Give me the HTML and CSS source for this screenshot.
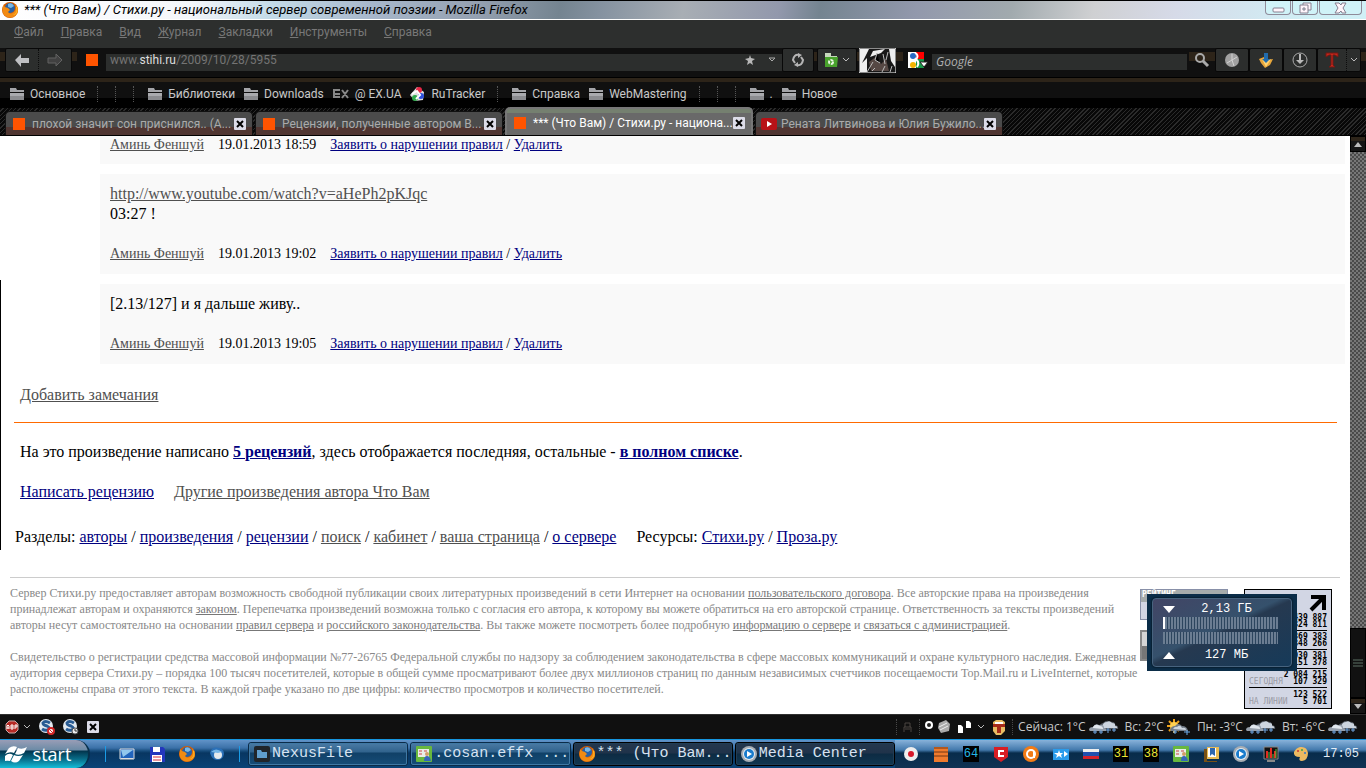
FILE: index.html
```html
<!DOCTYPE html>
<html lang="ru">
<head>
    <meta charset="utf-8">
    <title>*** (Что Вам) / Стихи.ру</title>
    <link rel="stylesheet" href="styles.css">
</head>
<body>
    <svg class="sprite" width="0" height="0" aria-hidden="true">
        <symbol id="folder" viewBox="0 0 14 12">
            <path fill="#a4a5a9" d="M0 0h6l1 2h7v2H0z"/>
            <path fill="#8b8c90" d="M0 5h14v7H0z"/>
            <path fill="#a9aaae" d="M0 5h14v3H0z"/>
        </symbol>
        <symbol id="x" viewBox="0 0 12 12">
            <rect width="12" height="12" rx="1" fill="#dcdce8"/>
            <path stroke="#000" stroke-width="2" d="M3 3l6 6M9 3l-6 6"/>
        </symbol>
        <symbol id="chevron" viewBox="0 0 8 6">
            <path fill="none" stroke="#bbb" stroke-width="1" d="M1 1l3 3 3-3"/>
        </symbol>
        <symbol id="firefox" viewBox="0 0 16 16">
            <circle cx="8" cy="8" r="8" fill="#d35d05"/>
            <circle cx="8" cy="6" r="5" fill="#2861a5"/>
            <path fill="#78b7e5" d="M6 2q4-2 6 2l-3 2-3-1z"/>
            <path fill="#f28b13" d="M1 3q2 3 5 3l2 2-2 2q2 3 6 0 3-3 1-8 5 5 2 10-4 5-10 3-6-3-4-10z"/>
            <path fill="#ffc528" d="M14 5q2 6-3 8 5 0 4-8z"/>
        </symbol>
        <symbol id="cloud" viewBox="0 0 31 14">
            <path fill="#555b63" d="M12 8q-1-4 3-5 4-4 7-1 5-1 5 3 4 1 3 4H13z"/>
            <path fill="#cdd5df" d="M14 7q1-5 5-5 3-2 5 1 4 0 3 3 3 0 2 2H14z"/>
            <path fill="#969fab" d="M1 10q0-3 4-3 2-4 6-2 5-1 5 3 3 0 2 3H2z"/>
            <path fill="#e1e7ed" d="M5 7q2-3 5-2l2 1q3 0 3 3L5 8z"/>
            <path stroke="#70a6e1" stroke-width="1" d="M7 10v4M5 12h4M13 10v4M11 12h4M20 8v5M18 10h5M26 8v4M24 10h4"/>
        </symbol>
        <symbol id="suncloud" viewBox="0 0 25 16">
            <path stroke="#f0a31a" stroke-width="2" d="M8 0v14M1 7h14M3 2l10 10M13 2L3 12"/>
            <circle cx="8" cy="7" r="4" fill="#ffd052"/>
            <path fill="#727c88" d="M4 11q1-4 5-4 3-4 7 0 5 0 6 5H5z"/>
            <path fill="#ccd5de" d="M7 10q2-3 4-2 3-3 5 1 4-1 4 2z"/>
            <path stroke="#6caceb" stroke-width="1" d="M9 11v4M7 13h4M21 11v5M18 13h6"/>
        </symbol>
        <symbol id="effx" viewBox="0 0 16 16">
            <rect width="16" height="16" rx="1" fill="#68b83d"/>
            <path fill="#e8eee7" d="M2 3h11v8H2z"/>
            <path stroke="#c44" stroke-width="1" d="M3 5h3M8 5h3M3 8h3"/>
            <path fill="#3567b8" d="M8 15q0-5 3-5t4 5z"/>
            <circle cx="11" cy="8" r="2" fill="#d19c69"/>
        </symbol>
        <symbol id="media" viewBox="0 0 16 16">
            <circle cx="8" cy="8" r="8" fill="#a8adb3"/>
            <circle cx="8" cy="8" r="6" fill="#e3edf5"/>
            <circle cx="8" cy="8" r="5" fill="#197bcc"/>
            <path fill="#fff" d="M6 5l5 3-5 3z"/>
        </symbol>
        <symbol id="ess" viewBox="0 0 16 16">
            <circle cx="7" cy="7" r="7" fill="#e2e9f0"/>
            <path fill="none" stroke="#285b93" stroke-width="3" d="M11 4q-5-3-7 0 0 2 4 3 4 2 1 4-3 1-6-1"/>
        </symbol>
    </svg>

    <header class="titlebar">
        <svg class="i16" viewBox="0 0 16 16"><use href="#firefox"/></svg>
        <span class="caption">*** (Что Вам) / Стихи.ру - национальный сервер современной поэзии - Mozilla Firefox</span>
        <div class="winbtns">
            <button aria-label="Свернуть"><svg width="13" height="12" viewBox="0 0 13 12"><rect x="1" y="6" width="11" height="4" rx="1" fill="#fff5fb" stroke="#858090"/></svg></button>
            <button aria-label="Развернуть"><svg width="13" height="12" viewBox="0 0 13 12"><path fill="#fff5fb" stroke="#858090" d="M4 1h8v7H4z"/><path fill="#fff5fb" stroke="#858090" d="M1 3h8v8H1z"/><path fill="#d4f3f8" stroke="#858090" d="M4 6h2v2H4z"/></svg></button>
            <button class="wide" aria-label="Закрыть"><svg width="13" height="12" viewBox="0 0 13 12"><path fill="#fff5fb" stroke="#858090" d="M1 1h4l2 2 1-2h4L9 6l3 5H8L7 9l-2 2H1l3-5z"/></svg></button>
        </div>
    </header>

    <nav class="menubar">
        <a href="#"><u>Ф</u>айл</a>
        <a href="#"><u>П</u>равка</a>
        <a href="#"><u>В</u>ид</a>
        <a href="#"><u>Ж</u>урнал</a>
        <a href="#"><u>З</u>акладки</a>
        <a href="#"><u>И</u>нструменты</a>
        <a href="#"><u>С</u>правка</a>
    </nav>

    <div class="navbar">
        <div class="group history">
            <button aria-label="Назад"><svg width="16" height="14" viewBox="0 0 16 14"><path fill="#bfc0c3" d="M1 7l6-6v4h8v5H7v4z"/></svg></button>
            <button aria-label="Вперёд"><svg width="16" height="14" viewBox="0 0 16 14"><path fill="#414141" stroke="#626262" d="M15 7L9 1v4H1v5h8v3z"/></svg></button>
        </div>
        <div class="urlbar">
            <span class="fav"></span>
            <div class="address" role="textbox" aria-label="Адрес">www.<b>stihi.ru</b>/2009/10/28/5955</div>
            <svg width="12" height="12" viewBox="0 0 12 12"><path fill="#b8b8b8" d="M6 1l1 3 4 1-3 2 1 4-3-2-3 2 1-4-3-2 4-1z"/></svg>
            <svg width="8" height="6" viewBox="0 0 8 6"><path fill="none" stroke="#aaa" d="M1 1h6L4 4z"/></svg>
        </div>
        <button class="toolbtn reload" aria-label="Обновить"><svg width="14" height="14" viewBox="0 0 14 14"><path fill="none" stroke="#b5b5b5" stroke-width="2" d="M8 2q-5-1-6 5l2 3M6 12q5 1 6-5l-2-3"/><path fill="#b5b5b5" d="M7 0l4 2-4 3zM7 14l-4-2 4-3z"/></svg></button>
        <button class="toolbtn recycle" aria-label="Папка">
            <svg width="14" height="14" viewBox="0 0 14 14"><path fill="#c7d8bd" d="M1 0h6v3h6v3H1z"/><path fill="#49a32d" d="M1 4h13l-1 10H1z"/><circle cx="7" cy="9" r="2" fill="none" stroke="#eaf5e3" stroke-width="2" stroke-dasharray="3 1"/></svg>
            <svg width="8" height="6"><use href="#chevron"/></svg>
        </button>
        <svg class="thumb" width="37" height="25" viewBox="0 0 37 25">
            <path fill="#181818" stroke="#fff" d="M0 0h37v25H0z"/>
            <path fill="#eee" d="M1 1h9L3 15 8 10v14H1zM30 1h6v18l-4-6zM14 3l12-2-4 4-11 4z"/>
            <path fill="#564844" d="M10 14l8-6 4 8 5-5 3 12H12z"/>
            <path stroke="#bbb" stroke-width="1" d="M8 24l6-10M18 5l-2 7 5 3M24 6l2 10M29 4l-2 8M23 24l3-6M31 24l2-6M13 23l3-3"/>
        </svg>
        <div class="searchbox">
            <svg width="20" height="17" viewBox="0 0 20 17">
                <path fill="#f00" d="M8 0h8v8H8z"/><path fill="#179647" d="M8 7h8v9H8z"/><path fill="#fff" d="M0 0h8v16H0z"/>
                <circle cx="5" cy="4" r="3" fill="#286ac4"/><circle cx="5" cy="13" r="3" fill="#f4b400"/>
                <path fill="none" stroke="#fff" stroke-width="2" d="M8 1q3 4 0 6 4 4 1 8"/>
                <path fill="#fff" stroke="#222" d="M12 10h8l-4 5z"/>
            </svg>
            <input type="text" placeholder="Google" aria-label="Поиск">
        </div>
        <button class="find" aria-label="Найти"><svg width="16" height="16" viewBox="0 0 16 16"><circle cx="6" cy="6" r="4" fill="none" stroke="#aaa" stroke-width="2"/><path stroke="#aaa" stroke-width="3" d="M9 9l5 5"/></svg></button>
        <button class="toolbtn" aria-label="Часы"><svg class="i16" viewBox="0 0 16 16"><circle cx="8" cy="8" r="7" fill="#a1a1a1"/><path fill="none" stroke="#d2d2d2" d="M8 2v6l5-3M8 8l-5 3M8 8l2 6"/></svg></button>
        <button class="toolbtn" aria-label="Загрузки"><svg class="i16" viewBox="0 0 16 16"><path fill="#e7a63b" d="M1 7l5-2 3 3 6-1-3 6-5 3-4-5z"/><path fill="#ffd472" d="M4 7l4 2 5-2-5 8z"/><path fill="#216bac" d="M6 1h4v6h2l-4 4-4-4h2z"/></svg></button>
        <button class="toolbtn" aria-label="Скачать"><svg class="i16" viewBox="0 0 16 16"><circle cx="8" cy="8" r="7" fill="none" stroke="#aaa"/><path fill="#bbb" d="M7 2h2v6h3l-4 4-4-4h3z"/></svg></button>
        <div class="group textool">
            <button aria-label="Текст"><svg class="i16" viewBox="0 0 16 16"><path fill="#c5261b" stroke="#701914" d="M2 1h12v4l-3-2H9v10l2 2H5l2-2V3H5L2 5z"/></svg></button>
            <button class="narrow" aria-label="Меню"><svg width="8" height="6"><use href="#chevron"/></svg></button>
        </div>
    </div>

    <nav class="bookmarks">
        <a href="#"><svg class="fold"><use href="#folder"/></svg>Основное</a>
        <i></i><i></i><i></i>
        <a href="#"><svg class="fold"><use href="#folder"/></svg>Библиотеки</a>
        <a href="#"><svg class="fold"><use href="#folder"/></svg>Downloads</a>
        <a href="#"><svg width="16" height="10" viewBox="0 0 16 10"><path fill="none" stroke="#888" stroke-width="2" d="M7 1H1v7h6M2 5h5M9 1l6 8M15 1L9 9"/></svg>@ EX.UA</a>
        <a href="#"><svg width="15" height="16" viewBox="0 0 15 16"><path fill="#ddd" d="M7 1l7 5-1 8-8 1-5-6z"/><circle cx="9" cy="4" r="3" fill="#e82746"/><circle cx="11" cy="10" r="3" fill="#2d50db"/><circle cx="5" cy="12" r="3" fill="#2fa84b"/><path fill="none" stroke="#fff" stroke-width="2" d="M2 8l5-3 3 4-4 4"/></svg>RuTracker</a>
        <i></i>
        <a href="#"><svg class="fold"><use href="#folder"/></svg>Справка</a>
        <a href="#"><svg class="fold"><use href="#folder"/></svg>WebMastering</a>
        <i></i><i></i><i></i>
        <a href="#"><svg class="fold"><use href="#folder"/></svg>.</a>
        <a href="#"><svg class="fold"><use href="#folder"/></svg>Новое</a>
    </nav>

    <div class="tabs">
        <div class="tab"><span class="fav"></span><span class="label">плохой значит сон приснился.. (А...</span><button aria-label="Закрыть"><svg width="12" height="12"><use href="#x"/></svg></button></div>
        <div class="tab"><span class="fav"></span><span class="label">Рецензии, полученные автором В...</span><button aria-label="Закрыть"><svg width="12" height="12"><use href="#x"/></svg></button></div>
        <div class="tab active"><span class="fav"></span><span class="label">*** (Что Вам) / Стихи.ру - национа...</span><button aria-label="Закрыть"><svg width="12" height="12"><use href="#x"/></svg></button></div>
        <div class="tab video"><svg width="16" height="12" viewBox="0 0 16 12"><rect width="16" height="12" rx="2" fill="#b81217"/><path fill="#fff" d="M6 3l5 3-5 3z"/></svg><span class="label">Рената Литвинова и Юлия Бужило...</span><button aria-label="Закрыть"><svg width="12" height="12"><use href="#x"/></svg></button></div>
    </div>

    <div class="viewport">
        <main class="page">
            <div class="notes">
                <article class="note first">
                    <p class="meta"><a class="seen" href="#">Аминь Феншуй</a><span>19.01.2013 18:59</span><span><a href="#">Заявить о нарушении правил</a> / <a href="#">Удалить</a></span></p>
                </article>
                <article class="note">
                    <p><a class="seen" href="#">http://www.youtube.com/watch?v=aHePh2pKJqc</a><br>03:27 !</p>
                    <p class="meta"><a class="seen" href="#">Аминь Феншуй</a><span>19.01.2013 19:02</span><span><a href="#">Заявить о нарушении правил</a> / <a href="#">Удалить</a></span></p>
                </article>
                <article class="note">
                    <p>[2.13/127] и я дальше живу..</p>
                    <p class="meta"><a class="seen" href="#">Аминь Феншуй</a><span>19.01.2013 19:05</span><span><a href="#">Заявить о нарушении правил</a> / <a href="#">Удалить</a></span></p>
                </article>
            </div>
            <p class="add"><a class="seen" href="#">Добавить замечания</a></p>
            <hr class="orange">
            <p class="line">На это произведение написано <a href="#"><b>5 рецензий</b></a>, здесь отображается последняя, остальные - <a href="#"><b>в полном списке</b></a>.</p>
            <p class="line actions"><a href="#">Написать рецензию</a><a class="seen" href="#">Другие произведения автора Что Вам</a></p>
            <p class="sections">
                <span>Разделы: <a href="#">авторы</a> / <a href="#">произведения</a> / <a href="#">рецензии</a> / <a class="seen" href="#">поиск</a> / <a class="seen" href="#">кабинет</a> / <a class="seen" href="#">ваша страница</a> / <a href="#">о сервере</a></span>
                <span>Ресурсы: <a href="#">Стихи.ру</a> / <a href="#">Проза.ру</a></span>
            </p>
            <footer class="footer">
                <div class="legal">
                    <p>Сервер Стихи.ру предоставляет авторам возможность свободной публикации своих литературных произведений в сети Интернет на основании <a href="#">пользовательского договора</a>. Все авторские права на произведения<br>
                    принадлежат авторам и охраняются <a href="#">законом</a>. Перепечатка произведений возможна только с согласия его автора, к которому вы можете обратиться на его авторской странице. Ответственность за тексты произведений<br>
                    авторы несут самостоятельно на основании <a href="#">правил сервера</a> и <a href="#">российского законодательства</a>. Вы также можете посмотреть более подробную <a href="#">информацию о сервере</a> и <a href="#">связаться с администрацией</a>.</p>
                    <p>Свидетельство о регистрации средства массовой информации №77-26765 Федеральной службы по надзору за соблюдением законодательства в сфере массовых коммуникаций и охране культурного наследия. Ежедневная<br>
                    аудитория сервера Стихи.ру – порядка 100 тысяч посетителей, которые в общей сумме просматривают более двух миллионов страниц по данным независимых счетчиков посещаемости Top.Mail.ru и LiveInternet, которые<br>
                    расположены справа от этого текста. В каждой графе указано по две цифры: количество просмотров и количество посетителей.</p>
                </div>
                <div class="badges">
                    <div class="badge">РЕЙТИНГ</div>
                    <div class="badge grey"></div>
                </div>
                <div class="counter">
                    <div class="arrow"><svg width="18" height="18" viewBox="0 0 18 18"><path fill="none" stroke="#000" stroke-width="4" d="M2 3h13v13M15 3L2 16"/></svg></div>
                    <div class="row"><span></span><span>439 887<br>324 811</span></div>
                    <div class="row"><span></span><span>369 383<br>348 266</span></div>
                    <div class="row"><span></span><span>030 381<br>151 378</span></div>
                    <div class="row"><span>СЕГОДНЯ</span><span>2 084 215<br>107 329</span></div>
                    <div class="row"><span>НА ЛИНИИ</span><span>123 522<br>5 701</span></div>
                </div>
            </footer>
        </main>
        <div class="scrollbar">
            <button aria-label="Вверх"><svg width="8" height="5" viewBox="0 0 8 5"><path fill="#bbb" d="M0 5l4-5 4 5z"/></svg></button>
            <div class="track"></div>
            <div class="grip"><svg width="10" height="8" viewBox="0 0 10 8"><path stroke="#5c7065" d="M0 1h10M0 4h10M0 7h10"/></svg></div>
            <button aria-label="Вниз"><svg width="8" height="5" viewBox="0 0 8 5"><path fill="#bbb" d="M0 0h8L4 5z"/></svg></button>
        </div>
        <div class="gadget">
            <div class="glass">
                <div class="read"><svg width="12" height="7" viewBox="0 0 12 7"><path fill="#fff" d="M0 0h12L6 7z"/></svg><span>2,13 ГБ</span></div>
                <div class="bar now"></div>
                <div class="bar"></div>
                <div class="read"><svg width="12" height="7" viewBox="0 0 12 7"><path fill="#fff" d="M0 7h12L6 0z"/></svg><span>127 МБ</span></div>
            </div>
        </div>
    </div>

    <div class="addons">
        <svg class="i14" viewBox="0 0 14 14"><path fill="#b52a25" stroke="#c8aaa8" d="M4 1h6l3 3v6l-3 3H4l-3-3V4z"/><path fill="none" stroke="#fff" d="M2 9V6l1-1 1 1v3M2 8h2M6 9V5h2v4H6M6 7h2M10 9V5h2v2h-2"/></svg>
        <svg width="8" height="6"><use href="#chevron"/></svg>
        <svg class="i16 ess" viewBox="0 0 16 16"><use href="#ess"/><circle cx="12" cy="12" r="3" fill="#fff" stroke="#d32626" stroke-width="2"/><path stroke="#d32626" d="M10 10l4 4"/></svg>
        <svg class="i16 ess" viewBox="0 0 16 16"><use href="#ess"/><circle cx="12" cy="12" r="3" fill="#eee" stroke="#555"/><path fill="none" stroke="#333" d="M12 10v2h2"/></svg>
        <button class="ess" aria-label="Закрыть"><svg width="12" height="12"><use href="#x"/></svg></button>
        <div class="status">
            <i></i>
            <svg class="i12 dim" viewBox="0 0 12 12"><path fill="none" stroke="#4a4540" stroke-width="1" d="M3 6V2h5v4M2 11V6h7v5M3 8h5"/></svg>
            <i></i>
            <svg class="rec" width="46" height="16" viewBox="0 0 46 16"><circle cx="4" cy="6" r="3" fill="#222" stroke="#fff" stroke-width="2"/><path fill="#aaa" d="M14 4l7-3 4 4-1 7-8 2-3-5z"/><path stroke="#eee" d="M14 8l8-4M15 11l8-4"/><path fill="#fff" d="M33 6h3l2 2v6h-5zM41 2h3l2 2v5h-5z"/></svg>
            <svg width="8" height="6"><use href="#chevron"/></svg>
            <svg class="i16" viewBox="0 0 16 16"><path fill="#e9bd62" d="M2 3l3-2h6l3 2v9l-4 4H5l-3-4z"/><path fill="#a82c1a" d="M2 5h12v3h-4v6H6V8H2z"/><path fill="#fff" d="M4 3h8v2H4z"/></svg>
            <i></i>
            <span>Сейчас: 1°C</span><svg width="31" height="14"><use href="#cloud"/></svg>
            <span class="day">Вс: 2°C</span><svg width="25" height="16"><use href="#suncloud"/></svg>
            <span class="day">Пн: -3°C</span><svg width="31" height="14"><use href="#cloud"/></svg>
            <span class="day">Вт: -6°C</span><svg width="31" height="14"><use href="#cloud"/></svg>
        </div>
    </div>

    <div class="taskbar">
        <button class="start"><svg width="24" height="18" viewBox="0 0 24 18"><path fill="#fff" d="M4 3q4-3 8-1l-3 6Q5 6 0 9zM13 3q4 2 9-1l-3 6q-5 3-9 1zM0 11q4-4 8-1l-3 6q-4-1-8 1zM9 10q4 2 9 0l-4 6q-4 3-8 0z"/></svg>start</button>
        <div class="quick">
            <svg class="i16" viewBox="0 0 16 16"><path fill="#2164bc" stroke="#ddd" d="M1 3h14v10H1z"/><path fill="#91c7ed" d="M2 4h12L4 11z"/><path fill="#ddd" d="M2 12h12v1H2z"/></svg>
            <svg class="i16" viewBox="0 0 16 16"><path fill="#2337bd" d="M1 1h13l2 2v13H1z"/><path fill="#fff" d="M4 1h7v5H4zM3 9h10v7H3z"/><path stroke="#d82d38" d="M4 11h8M4 14h8"/></svg>
            <svg class="i16" viewBox="0 0 16 16"><use href="#firefox"/></svg>
            <svg class="i16" viewBox="0 0 16 16"><path fill="#2b70b7" d="M1 7q2-7 9-5 5 1 5 6-1 6-7 6-5 0-7-7z"/><circle cx="9" cy="9" r="4" fill="#e5e9ed"/><path fill="#76b6e8" d="M2 6q5-5 11 0L9 7z"/></svg>
        </div>
        <div class="tasks">
            <button><svg class="i16" viewBox="0 0 16 16"><rect width="16" height="16" rx="2" fill="#20252a"/><path fill="#5f9dcc" d="M3 4h4l1 2h5v6H3z"/></svg>NexusFile</button>
            <button><svg class="i16" viewBox="0 0 16 16"><use href="#effx"/></svg>.cosan.effx ...</button>
            <button class="dark"><svg class="i16" viewBox="0 0 16 16"><use href="#firefox"/></svg>*** (Что Вам...</button>
            <button class="dark"><svg class="i16" viewBox="0 0 16 16"><use href="#media"/></svg>Media Center</button>
        </div>
        <div class="tray">
            <svg class="i16" viewBox="0 0 16 16"><circle cx="8" cy="8" r="7" fill="#eee"/><circle cx="8" cy="8" r="3" fill="#d8192a"/></svg>
            <svg class="i16" viewBox="0 0 16 16"><path fill="#ef7a2d" d="M1 1h14v15H1z"/><path stroke="#733714" d="M1 2h14M1 6h14M1 10h14"/></svg>
            <span class="led cyan">64</span>
            <svg class="i16" viewBox="0 0 16 16"><path fill="#d81e24" d="M1 1h14v10l-7 5-7-5z"/><path fill="none" stroke="#fff" stroke-width="2" d="M11 5H6v5h5"/></svg>
            <svg class="i16" viewBox="0 0 16 16"><circle cx="8" cy="8" r="8" fill="#f17b16"/><circle cx="8" cy="8" r="4" fill="none" stroke="#fff" stroke-width="2"/><path stroke="#fff" stroke-width="2" d="M11 5v7"/></svg>
            <svg class="i16" viewBox="0 0 16 16"><path fill="#2b9ceb" d="M0 3h16v11H0z"/><path fill="#fff" d="M6 4l1 3h3L8 9l1 3-3-2-3 2 1-3-3-2h4zM11 5l4 3-4 3z"/></svg>
            <svg class="i16" viewBox="0 0 16 16"><path fill="#eee" d="M0 3h16v4H0z"/><path fill="#204fae" d="M0 6h16v4H0z"/><path fill="#d5222b" d="M0 10h16v3H0z"/></svg>
            <span class="led">31</span>
            <span class="led">38</span>
            <svg class="i16" viewBox="0 0 16 16"><use href="#effx"/></svg>
            <svg class="i16" viewBox="0 0 16 16"><path fill="#e8bb55" d="M4 1h12v12H4z"/><path fill="#775016" d="M1 3h3v12h10v1H1z"/><path fill="#fff" d="M5 2h8v9H5z"/><path fill="#2e67af" d="M7 2h5v8L9 8l-2 2z"/></svg>
            <svg class="i16" viewBox="0 0 16 16"><use href="#media"/></svg>
            <svg class="i16" viewBox="0 0 16 16"><path fill="#111" stroke="#888" d="M1 1h14v12H1z"/><path stroke="#e22c22" stroke-width="2" d="M4 12V5M8 12V2M12 12V5"/><path stroke="#55c042" d="M6 12V6M10 12V8M13 12V3"/><path fill="#888" d="M4 14h8v2H4z"/></svg>
            <svg class="i16" viewBox="0 0 16 16"><path fill="#edba61" d="M7 1q7-1 8 6 0 7-6 8-4 0-2-4Q0 11 1 6q2-4 6-5z"/><circle cx="5" cy="5" r="1" fill="#c33"/><circle cx="9" cy="4" r="1" fill="#38a54a"/><circle cx="12" cy="7" r="1" fill="#37c"/></svg>
            <time>17:05</time>
        </div>
    </div>
</body>
</html>
```
FILE: styles.css
```css
* {
    box-sizing: border-box;
}

body {
    margin: 0;
    height: 100vh;
    display: flex;
    flex-direction: column;
    overflow: hidden;
    background: #000;
    font-family: Roboto, "Open Sans", sans-serif;
    font-size: 12px;
    line-height: 16px;
    color: #c8c8c8;
}

p {
    margin: 0;
}

button {
    margin: 0;
    padding: 0;
    border: 0;
    background: none;
    font: inherit;
    color: inherit;
    display: flex;
    align-items: center;
    justify-content: center;
}

svg {
    flex: none;
    display: block;
}

.sprite {
    position: absolute;
}

.i16 {
    width: 16px;
    height: 16px;
}

.i14 {
    width: 14px;
    height: 14px;
}

.i12 {
    width: 12px;
    height: 12px;
}

/* window frame */
.titlebar {
    height: 20px;
    flex: none;
    display: flex;
    align-items: center;
    padding: 0 4px 0 2px;
    gap: 6px;
    border-top: 1px solid #000;
    border-bottom: 1px solid #fff;
    background: linear-gradient(100deg, #fff 0, #f4f6fa 14%, #c3dbe8 20%, #a8b8cc 27%, #94a0b0 35%, #748490 41%, #8592a0 44%, #a8aeb4 50%, #9298ac 57%, #748490 60%, #9298ac 67%, #a1aaae 74%, #cfd0d2 80%, #d6dae8 86%, #d0f0f6 96%);
}

.caption {
    flex: 1;
    color: #000;
    font-size: 13px;
    font-style: italic;
    white-space: nowrap;
}

.winbtns {
    display: flex;
    align-self: flex-start;
    gap: 1px;
}

.winbtns button {
    width: 26px;
    height: 14px;
    background: #d0f3f8;
    border: 1px solid #8f8b99;
    border-top: 0;
    border-radius: 0 0 4px 4px;
}

.winbtns .wide {
    width: 43px;
}

.menubar {
    height: 28px;
    flex: none;
    display: flex;
    gap: 17px;
    padding: 4px 14px;
    background: #2d2f2e;
}

.menubar a {
    color: #787878;
    text-decoration: none;
}

/* navigation toolbar */
.navbar {
    height: 30px;
    flex: none;
    display: flex;
    align-items: flex-start;
    padding: 0 5px;
    background: linear-gradient(#101010 0 4px, #2d2419 4px 13px, #101010 13px 29px, #000 29px);
}

.group,
.toolbtn {
    height: 24px;
    background: #2c2e2d;
    border: 1px solid #080808;
    border-radius: 2px;
}

.group {
    display: flex;
}

.group button {
    flex: 1;
}

.group button + button {
    border-left: 1px dotted #0c0c0c;
}

.history {
    width: 67px;
    margin-right: 5px;
}

.urlbar {
    flex: 1;
    height: 29px;
    display: flex;
    align-items: center;
    background: linear-gradient(90deg, #101010 0 29px, transparent 29px), linear-gradient(#101010 0 6px, #2c2e2d 6px 23px, #101010 23px);
    padding: 0 6px 5px 9px;
    gap: 12px;
}

.fav {
    flex: none;
    width: 12px;
    height: 12px;
    background: #ff5400;
}

.address {
    flex: 1;
    color: #747474;
}

.address b {
    font-weight: normal;
    color: #ddd;
}

.toolbtn {
    width: 34px;
    gap: 4px;
}

.reload {
    width: 32px;
    margin-right: 3px;
}

.recycle {
    width: 40px;
    margin-right: 2px;
}

.thumb {
    margin-right: 7px;
}

.searchbox {
    width: 286px;
    height: 24px;
    display: flex;
    align-items: center;
    padding: 0 2px 0 5px;
    background: #101010;
}

.searchbox input {
    flex: 1;
    min-width: 0;
    height: 16px;
    margin: 4px 0 0 4px;
    padding: 0 4px;
    border: 0;
    background: #2c2e2d;
    font: italic 12px/16px "Open Sans", sans-serif;
    color: #c8c8c8;
}

.searchbox input::placeholder {
    color: #b0b0b0;
}

.find {
    width: 26px;
    height: 24px;
}

.textool {
    width: 44px;
}

.group .narrow {
    flex: none;
    width: 14px;
}

/* bookmarks toolbar */
.bookmarks {
    height: 30px;
    flex: none;
    display: flex;
    align-items: center;
    gap: 9px;
    padding: 2px 10px 0;
    background: linear-gradient(#2d2419 0 4px, #101010 4px 20px, #000 20px);
}

.bookmarks a {
    display: flex;
    align-items: center;
    gap: 6px;
    color: #c8c8c8;
    text-decoration: none;
    white-space: nowrap;
}

.bookmarks i {
    width: 1px;
    height: 16px;
    margin: 0 5px 0 3px;
    border-left: 1px dotted #555;
}

.fold {
    width: 14px;
    height: 12px;
}

/* tabs */
.tabs {
    height: 28px;
    flex: none;
    display: flex;
    align-items: flex-end;
    gap: 2px;
    padding-left: 5px;
    border-bottom: 1px solid #000;
    background: repeating-linear-gradient(135deg, #080808 0 2px, #2b2b2b 2px 3px);
}

.tab {
    width: 248px;
    height: 24px;
    display: flex;
    align-items: center;
    gap: 7px;
    padding: 0 6px 0 7px;
    border: 1px solid #111;
    border-bottom: 0;
    border-radius: 5px 5px 0 0;
    background: linear-gradient(#4b4b4b 0 15px, #503632 15px);
    color: #aaa;
}

.tab .label {
    flex: 1;
    min-width: 0;
    white-space: nowrap;
}

.tab.active {
    height: 28px;
    border: 2px solid #777;
    border-bottom: 0;
    background: linear-gradient(#758070 0 4px, #696969 4px);
    color: #fff;
    padding: 2px 6px 0 7px;
}

.tab.video {
    gap: 4px;
    padding-left: 5px;
}

/* page */
.viewport {
    position: relative;
    flex: 1;
    min-height: 0;
    display: flex;
    background: #fff;
}

.page {
    flex: 1;
    min-width: 0;
    overflow: hidden;
    font-family: "Liberation Serif", "Times New Roman", serif;
    font-size: 16px;
    line-height: 20px;
    color: #000;
}

.page::before {
    content: "";
    position: absolute;
    left: 0;
    top: 144px;
    width: 1px;
    height: 270px;
    background: #000;
}

.page a {
    color: #000080;
}

.page a.seen {
    color: #505050;
}

.notes {
    display: flex;
    flex-direction: column;
    gap: 10px;
    margin: 0 5px 21px 100px;
}

.note {
    display: flex;
    flex-direction: column;
    gap: 20px;
    padding: 10px;
    background: #f9f9f9;
}

.first {
    padding-top: 0;
}

.first .meta {
    line-height: 18px;
}

.meta {
    display: flex;
    gap: 14px;
    font-size: 14px;
}

.add {
    padding-left: 20px;
}

.orange {
    height: 1px;
    margin: 17px 13px 19px 14px;
    border: 0;
    background: #ff6a00;
}

.line {
    padding-left: 20px;
    margin-bottom: 20px;
}

.actions {
    display: flex;
    gap: 20px;
}

.sections {
    display: flex;
    gap: 20px;
    padding: 5px 15px 0;
}

.footer {
    display: flex;
    margin: 30px 10px 0;
    padding-top: 7px;
    border-top: 1px solid #ccc;
    font-size: 12px;
    line-height: 16px;
    color: #888;
}

.footer a {
    color: #777;
}

.legal {
    flex: 1;
    min-width: 0;
    white-space: nowrap;
}

.legal p + p {
    margin-top: 16px;
}

.badges {
    width: 88px;
    margin: 4px 16px 0 10px;
}

.badge {
    height: 31px;
    margin-bottom: 10px;
    padding-left: 1px;
    border: 1px solid #8890a8;
    background: linear-gradient(#a6acac 0 12px, #d2d6e4 12px);
    font: bold 8px/10px "DejaVu Sans Mono", monospace;
    color: #fff;
}

.badge.grey {
    border: 2px solid #888;
    background: linear-gradient(#d5d5d5 0 14px, #777 14px);
}

.counter {
    width: 88px;
    height: 120px;
    margin: 4px 8px 0 0;
    padding: 4px;
    border: 1px solid #000;
    background: #d2d6e4;
    font: bold 8px/7px "DejaVu Sans Mono", monospace;
    color: #000;
}

.arrow {
    height: 18px;
    display: flex;
    justify-content: flex-end;
}

.row {
    height: 19px;
    display: flex;
    align-items: flex-end;
    justify-content: space-between;
    padding-bottom: 2px;
    border-bottom: 1px solid #000;
    text-align: right;
    white-space: nowrap;
}

.row:last-child {
    border: 0;
}

.row span:first-child {
    color: #9a9ba4;
    font-weight: normal;
}

/* scrollbar */
.scrollbar {
    width: 16px;
    display: flex;
    flex-direction: column;
    background: #111;
}

.scrollbar button {
    height: 16px;
    border: 1px solid #000;
    background: linear-gradient(#2d2419 0 4px, #151515 4px);
}

.track {
    flex: 1;
    background: repeating-conic-gradient(#4a4a4a 0 25%, #777 0 50%) 0 0 / 4px 4px;
}

.grip {
    height: 70px;
    display: flex;
    align-items: center;
    justify-content: center;
    border: 1px solid #000;
    background: #111;
}

/* memory gadget floating over the page */
.gadget {
    position: absolute;
    right: 69px;
    bottom: 43px;
    width: 150px;
    height: 77px;
    padding: 4px 5px;
    background: #0b2d48;
}

.glass {
    height: 69px;
    padding: 2px 13px 0 10px;
    border: 1px solid #47637e;
    border-radius: 4px;
    background: linear-gradient(155deg, #424565, #35516c 45%, #263950 50%, #163a59);
    box-shadow: 0 0 2px #000;
}

.read {
    height: 16px;
    display: flex;
    align-items: center;
    font: 12px/16px "Liberation Mono", monospace;
    color: #fff;
}

.read span {
    flex: 1;
    text-align: center;
}

.bar {
    height: 12px;
    margin: 0 0 3px;
    background: repeating-linear-gradient(90deg, #6b7d92 0 2px, #2c455e 2px 3px);
}

.now {
    border-left: 2px solid #fff;
}

/* add-on bar */
.addons {
    height: 25px;
    flex: none;
    display: flex;
    align-items: center;
    gap: 4px;
    padding: 0 8px 0 5px;
    background: #101010;
    border-top: 1px solid #303030;
    font-family: "Open Sans", sans-serif;
}

.ess {
    margin-left: 4px;
}

.status {
    display: flex;
    align-items: center;
    margin-left: auto;
    gap: 2px;
    white-space: nowrap;
}

.status i {
    width: 1px;
    height: 16px;
    margin: 0 3px;
    border-left: 1px dotted #484848;
}

.day {
    margin-left: 4px;
}

.rec {
    margin-right: 4px;
}

.status .i16 {
    margin-left: 4px;
}

/* taskbar */
.taskbar {
    height: 29px;
    flex: none;
    display: flex;
    align-items: center;
    border-top: 1px solid #1596e0;
    background: linear-gradient(#6193c8 0, #3b71a8 8px, #174b7a 11px, #083661 13px, #0a4377 100%);
}

.start {
    width: 90px;
    height: 28px;
    gap: 4px;
    padding-right: 12px;
    background: linear-gradient(#999db6 0, #6c8ba6 10px, #02344c 11px, #086c88 19px, #15bdd8 100%);
    border-right: 2px solid #07304b;
    border-radius: 0 14px 14px 0;
    font-family: "Open Sans", sans-serif;
    font-size: 18px;
    color: #fff;
}

.quick {
    display: flex;
    align-items: center;
    gap: 14px;
    width: 135px;
    height: 16px;
    margin: 0 8px 0 15px;
    padding-left: 13px;
    border-left: 1px solid #1a9be6;
    border-right: 1px solid #1a9be6;
}

.tasks {
    flex: 1;
    min-width: 0;
    display: flex;
    gap: 2px;
}

.tasks button {
    flex: 1;
    min-width: 0;
    height: 24px;
    justify-content: flex-start;
    gap: 2px;
    padding-left: 5px;
    border: 1px solid #0b2b48;
    outline: 1px solid #3f78a4;
    outline-offset: -2px;
    border-radius: 3px;
    background: linear-gradient(#4b7ba5, #31638d 9px, #104067 10px, #164d78);
    font: 15px/20px "Liberation Mono", monospace;
    color: #d6e3f2;
    white-space: nowrap;
}

.tasks .dark {
    background: linear-gradient(#24384f, #20334a 10px, #0d2b43 11px, #103650);
    outline-color: #203d56;
    border-color: #000;
}

.tray {
    display: flex;
    align-items: center;
    gap: 14px;
    height: 28px;
    padding: 0 7px 0 8px;
    background: linear-gradient(#88b2da 0, #4379ac 10px, #082c4b 13px, #103253 100%);
}

.led {
    width: 16px;
    height: 16px;
    background: #000;
    font: 12px/16px "Liberation Mono", monospace;
    text-align: center;
    color: #ece735;
}

.cyan {
    color: #24b6e6;
}

.tray time {
    font: 12px/16px "Liberation Mono", monospace;
    color: #e4edf6;
}
```
